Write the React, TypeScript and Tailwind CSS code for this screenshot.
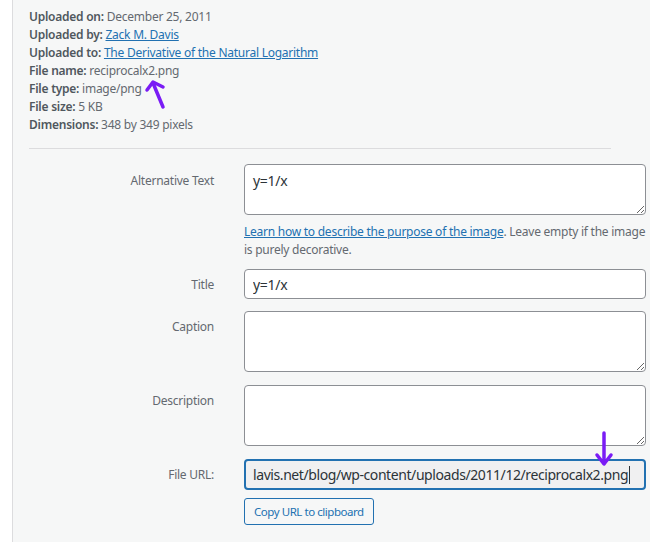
import React from "react";

const meta: { label: string; value: string; link?: boolean }[] = [
  { label: "Uploaded on:", value: "December 25, 2011" },
  { label: "Uploaded by:", value: "Zack M. Davis", link: true },
  { label: "Uploaded to:", value: "The Derivative of the Natural Logarithm", link: true },
  { label: "File name:", value: "reciprocalx2.png" },
  { label: "File type:", value: "image/png" },
  { label: "File size:", value: "5 KB" },
  { label: "Dimensions:", value: "348 by 349 pixels" },
];

const font = { fontFamily: '"Noto Sans", "Open Sans", sans-serif' };

function Label({ children, top }: { children: React.ReactNode; top: string }) {
  return (
    <div className={`text-right text-[12px] leading-[18px] tracking-[-0.25px] text-[#646970] ${top}`}>
      {children}
    </div>
  );
}

export default function App() {
  return (
    <div className="relative flex h-[542px] w-[650px] overflow-hidden bg-white" style={font}>
      <div className="w-[12px] shrink-0 bg-white" />
      <div className="flex-1 border-l border-[#dcdcde] bg-[#f6f7f7] pl-[16px] pt-[8px]">
        <div className="text-[12px] leading-[18px] tracking-[-0.25px] text-[#646970]">
          {meta.map((m) => (
            <div key={m.label} className="whitespace-nowrap">
              <span className="font-semibold text-[#50575e]">{m.label}</span>{" "}
              {m.link ? (
                <a className="text-[#2271b1] underline" href="#">
                  {m.value}
                </a>
              ) : (
                m.value
              )}
            </div>
          ))}
        </div>
        <div className="mt-[14px] h-px w-[582px] bg-[#dcdcde]" />

        <div className="mt-[15px] grid grid-cols-[185px_402px] gap-x-[30px]">
          <Label top="pt-[8px]">Alternative Text</Label>
          <div>
            <textarea
              defaultValue="y=1/x"
              className="block h-[51px] w-full rounded-[4px] border border-[#8c8f94] bg-white px-[8px] py-[6px] text-[14px] leading-[20px] tracking-[-0.3px] text-[#2c3338] outline-none"
            />
            <p className="mt-[8px] text-[12px] leading-[18px] tracking-[-0.25px] text-[#646970]">
              <a className="text-[#2271b1] underline" href="#">
                Learn how to describe the purpose of the image
              </a>
              . Leave empty if the image is purely decorative.
            </p>
          </div>

          <Label top="mt-[10px] pt-[7px]">Title</Label>
          <input
            defaultValue="y=1/x"
            className="mt-[10px] block h-[30px] w-full rounded-[4px] border border-[#8c8f94] bg-white px-[8px] text-[14px] tracking-[-0.3px] text-[#2c3338] outline-none"
          />

          <Label top="mt-[12px] pt-[7px]">Caption</Label>
          <textarea className="mt-[12px] block h-[61px] w-full rounded-[4px] border border-[#8c8f94] bg-white px-[8px] py-[6px] text-[14px] outline-none" />

          <Label top="mt-[13px] pt-[7px]">Description</Label>
          <textarea className="mt-[13px] block h-[61px] w-full rounded-[4px] border border-[#8c8f94] bg-white px-[8px] py-[6px] text-[14px] outline-none" />

          <Label top="mt-[13px] pt-[7px]">File URL:</Label>
          <div className="mt-[13px]">
            <div className="flex h-[31px] w-full items-center overflow-hidden whitespace-nowrap rounded-[4px] border-2 border-[#2271b1] bg-[#f0f0f1] px-[7px] text-[14px] tracking-[-0.42px] text-[#2c3338]">
              lavis.net/blog/wp-content/uploads/2011/12/reciprocalx2.png
              <span className="ml-[1px] inline-block h-[18px] w-px shrink-0 bg-[#2c3338]" />
            </div>
            <button
              type="button"
              className="mt-[8px] h-[27px] rounded-[3px] border border-[#2271b1] bg-[#f6f7f7] px-[9px] text-[11.5px] tracking-[-0.45px] text-[#2271b1]"
            >
              Copy URL to clipboard
            </button>
          </div>
        </div>
      </div>

      <svg className="pointer-events-none absolute left-0 top-0" width="650" height="542">
        <g stroke="#7a1cf5" strokeWidth="3.5" strokeLinecap="round" strokeLinejoin="round" fill="none">
          <path d="M163 107 L153 83" />
          <path d="M147 90 L153 82 L163 87" />
          <path d="M604 433 L604 463" />
          <path d="M597 455 L604 464 L611 455" />
        </g>
      </svg>
    </div>
  );
}
